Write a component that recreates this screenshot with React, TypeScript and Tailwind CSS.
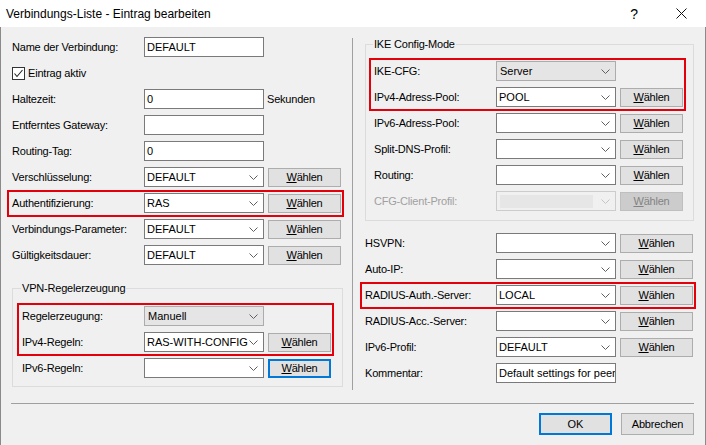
import React from 'react';

const RED = 'border-2 border-[#e3000b]';

function Chevron({ disabled }: { disabled?: boolean }) {
	return (
		<svg width="9" height="5" viewBox="0 0 9 5" className="shrink-0">
			<polyline
				points="0.5,0.5 4.5,4.5 8.5,0.5"
				fill="none"
				stroke={disabled ? '#c4c4c4' : '#606060'}
				strokeWidth="1"
			/>
		</svg>
	);
}

function TextBox({ value = '' }: { value?: string }) {
	return (
		<div className="flex h-[20px] w-[120px] shrink-0 items-center overflow-hidden whitespace-nowrap border border-[#7a7a7a] bg-white pl-[2px]">
			{value}
		</div>
	);
}

function Combo({
	value = '',
	variant = 'edit'
}: {
	value?: string;
	variant?: 'edit' | 'fixed' | 'disabled';
}) {
	if (variant === 'disabled')
		return (
			<div className="flex h-[20px] w-[120px] shrink-0 items-center border border-[#cccccc] bg-[#f0f0f0] pl-[3px] pr-[5px]">
				<div className="mr-[8px] h-[13px] flex-1 bg-[#e6e6e6]" />
				<Chevron disabled />
			</div>
		);

	return (
		<div
			className={
				variant === 'fixed'
					? 'flex h-[20px] w-[120px] shrink-0 items-center border border-[#acacac] bg-[#e5e5e5] pl-[3px] pr-[5px]'
					: 'flex h-[20px] w-[120px] shrink-0 items-center border border-[#7a7a7a] bg-white pl-[2px] pr-[5px]'
			}
		>
			<span className="flex-1 overflow-hidden whitespace-nowrap">{value}</span>
			<Chevron />
		</div>
	);
}

function Waehlen({
	wide,
	focused,
	disabled
}: {
	wide?: boolean;
	focused?: boolean;
	disabled?: boolean;
}) {
	let cls =
		'ml-[4px] flex h-[19px] shrink-0 items-center justify-center tracking-[-0.2px] ';
	cls += wide ? 'w-[73px] ' : 'w-[63px] ';
	if (disabled) cls += 'border border-[#bfbfbf] bg-[#cccccc] text-[#838383]';
	else if (focused) cls += 'border-2 border-[#0078d7] bg-[#e1e1e1]';
	else cls += 'border border-[#adadad] bg-[#e1e1e1]';

	return (
		<div className={cls}>
			<span className="underline underline-offset-[1px]">W</span>ählen
		</div>
	);
}

function Row({
	label,
	labelWidth,
	disabled,
	children
}: {
	label: string;
	labelWidth: string;
	disabled?: boolean;
	children: React.ReactNode;
}) {
	return (
		<div className="flex h-[20px] items-center">
			<span
				className={`${labelWidth} shrink-0 tracking-[-0.2px] ${disabled ? 'text-[#a0a0a0]' : ''}`}
			>
				{label}
			</span>
			{children}
		</div>
	);
}

// red highlight frame, negative margins keep the rows where they were
function Marked({ children }: { children: React.ReactNode }) {
	return (
		<div
			className={`${RED} -mb-[4px] -ml-[5px] -mr-[3px] -mt-[3px] flex flex-col gap-[6px] self-start pb-[2px] pl-[3px] pr-[1px] pt-[1px]`}
		>
			{children}
		</div>
	);
}

function Group({
	title,
	className,
	children
}: {
	title: string;
	className: string;
	children: React.ReactNode;
}) {
	return (
		<fieldset className={`border border-[#dcdcdc] ${className}`}>
			<legend className="ml-[-1px] px-[1px] leading-[14px] tracking-[-0.2px]">
				{title}
			</legend>
			<div className="flex flex-col gap-[6px]">{children}</div>
		</fieldset>
	);
}

function LeftColumn() {
	const lw = 'w-[132px]';
	return (
		<div className="flex w-[351px] shrink-0 flex-col gap-[6px] pl-[11px] pr-[10px] pt-[10px]">
			<Row label="Name der Verbindung:" labelWidth={lw}>
				<TextBox value="DEFAULT" />
			</Row>
			<div className="flex h-[20px] items-center gap-[3px]">
				<div className="flex h-[13px] w-[13px] items-center justify-center border border-[#333333] bg-white">
					<svg width="11" height="11" viewBox="0 0 11 11">
						<polyline
							points="1.5,5.5 4,8.5 9.5,2"
							fill="none"
							stroke="#222"
							strokeWidth="1.1"
						/>
					</svg>
				</div>
				<span className="tracking-[-0.2px]">Eintrag aktiv</span>
			</div>
			<Row label="Haltezeit:" labelWidth={lw}>
				<TextBox value="0" />
				<span className="ml-[3px] tracking-[-0.2px]">Sekunden</span>
			</Row>
			<Row label="Entferntes Gateway:" labelWidth={lw}>
				<TextBox />
			</Row>
			<Row label="Routing-Tag:" labelWidth={lw}>
				<TextBox value="0" />
			</Row>
			<Row label="Verschlüsselung:" labelWidth={lw}>
				<Combo value="DEFAULT" />
				<Waehlen wide />
			</Row>
			<Marked>
				<Row label="Authentifizierung:" labelWidth={lw}>
					<Combo value="RAS" />
					<Waehlen wide />
				</Row>
			</Marked>
			<Row label="Verbindungs-Parameter:" labelWidth={lw}>
				<Combo value="DEFAULT" />
				<Waehlen wide />
			</Row>
			<Row label="Gültigkeitsdauer:" labelWidth={lw}>
				<Combo value="DEFAULT" />
				<Waehlen wide />
			</Row>

			<Group
				title="VPN-Regelerzeugung"
				className="mt-[10px] w-[331px] pb-[8px] pl-[9px] pt-[11px]"
			>
				<Marked>
					<Row label="Regelerzeugung:" labelWidth="w-[122px]">
						<Combo value="Manuell" variant="fixed" />
					</Row>
					<Row label="IPv4-Regeln:" labelWidth="w-[122px]">
						<Combo value="RAS-WITH-CONFIG" />
						<Waehlen />
					</Row>
				</Marked>
				<Row label="IPv6-Regeln:" labelWidth="w-[122px]">
					<Combo />
					<Waehlen focused />
				</Row>
			</Group>
		</div>
	);
}

function RightColumn() {
	const gw = 'w-[122px]';
	const ow = 'w-[131px]';
	return (
		<div className="flex flex-1 flex-col gap-[6px] pl-[12px] pt-[10px]">
			<Group title="IKE Config-Mode" className="w-[329px] pb-[9px] pl-[8px] pt-[10px]">
				<Marked>
					<Row label="IKE-CFG:" labelWidth={gw}>
						<Combo value="Server" variant="fixed" />
					</Row>
					<Row label="IPv4-Adress-Pool:" labelWidth={gw}>
						<Combo value="POOL" />
						<Waehlen />
					</Row>
				</Marked>
				<Row label="IPv6-Adress-Pool:" labelWidth={gw}>
					<Combo />
					<Waehlen />
				</Row>
				<Row label="Split-DNS-Profil:" labelWidth={gw}>
					<Combo />
					<Waehlen />
				</Row>
				<Row label="Routing:" labelWidth={gw}>
					<Combo />
					<Waehlen />
				</Row>
				<Row label="CFG-Client-Profil:" labelWidth={gw} disabled>
					<Combo variant="disabled" />
					<Waehlen disabled />
				</Row>
			</Group>

			<div className="mt-[6px] flex flex-col gap-[6px]">
				<Row label="HSVPN:" labelWidth={ow}>
					<Combo />
					<Waehlen wide />
				</Row>
				<Row label="Auto-IP:" labelWidth={ow}>
					<Combo />
					<Waehlen wide />
				</Row>
				<Marked>
					<Row label="RADIUS-Auth.-Server:" labelWidth={ow}>
						<Combo value="LOCAL" />
						<Waehlen wide />
					</Row>
				</Marked>
				<Row label="RADIUS-Acc.-Server:" labelWidth={ow}>
					<Combo />
					<Waehlen wide />
				</Row>
				<Row label="IPv6-Profil:" labelWidth={ow}>
					<Combo value="DEFAULT" />
					<Waehlen wide />
				</Row>
				<Row label="Kommentar:" labelWidth={ow}>
					<TextBox value="Default settings for peers" />
				</Row>
			</div>
		</div>
	);
}

export default function App() {
	return (
		<div className="flex h-[445px] w-[706px] flex-col overflow-hidden bg-[#f0f0f0] font-['Liberation_Sans',Arial,sans-serif] text-[11px] text-black">
			<div className="flex h-[27px] shrink-0 items-center bg-white pl-[6px]">
				<span className="flex-1 text-[12px]">Verbindungs-Liste - Eintrag bearbeiten</span>
				<span className="mr-[38px] text-[14px] leading-none">?</span>
				<svg width="11" height="11" viewBox="0 0 11 11" className="mr-[19px]">
					<path d="M0.5 0.5 L10.5 10.5 M10.5 0.5 L0.5 10.5" stroke="#111" strokeWidth="1" />
				</svg>
			</div>

			<div className="flex flex-1 flex-col border-x border-[#8a8a8a]">
				<div className="flex h-[376px] shrink-0">
					<LeftColumn />
					<div className="mb-[13px] mt-[11px] w-px shrink-0 bg-[#a0a0a0]" />
					<RightColumn />
				</div>

				<div className="ml-[10px] mr-[11px] h-px bg-[#a0a0a0]" />

				<div className="flex justify-end gap-[9px] pr-[11px] pt-[9px]">
					<div className="flex h-[22px] w-[73px] items-center justify-center border-2 border-[#0078d7] bg-[#e1e1e1]">
						OK
					</div>
					<div className="flex h-[22px] w-[73px] items-center justify-center border border-[#adadad] bg-[#e1e1e1] tracking-[-0.2px]">
						Abbrechen
					</div>
				</div>
			</div>
		</div>
	);
}
